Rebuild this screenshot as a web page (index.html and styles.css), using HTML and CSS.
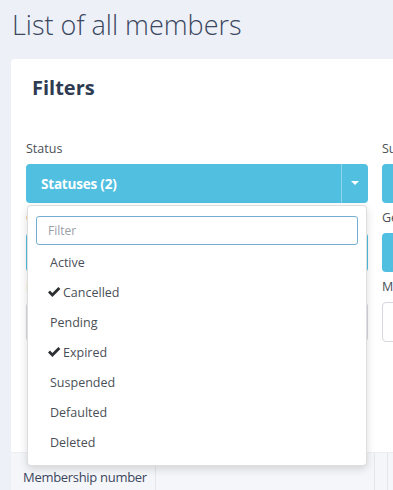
FILE: index.html
```html
<!DOCTYPE html>
<html lang="en">
<head>
    <meta charset="UTF-8">
    <meta name="viewport" content="width=device-width, initial-scale=1.0">
    <title>Members</title>
    <link rel="stylesheet" href="styles.css">
</head>
<body>
    <div class="page">
        <h1 class="page-title">List of all members</h1>

        <div class="card">
            <div class="filters">
                <h2 class="filters-title">Filters</h2>

                <div class="filter-grid">
                    <div class="field">
                        <label>Status</label>
                        <div class="select-wrap">
                            <button class="select-btn" type="button">
                                <span class="select-text">Statuses (2)</span>
                                <span class="select-caret"></span>
                            </button>

                            <div class="dropdown-menu">
                                <input class="menu-search" type="text" placeholder="Filter">
                                <ul class="menu-list">
                                    <li>Active</li>
                                    <li class="checked"><svg class="check" viewBox="0 0 14 12"><path d="M1 6.6 L3 4.6 L5.4 7 L11.4 1 L13.4 3 L5.4 11 Z"/></svg>Cancelled</li>
                                    <li>Pending</li>
                                    <li class="checked"><svg class="check" viewBox="0 0 14 12"><path d="M1 6.6 L3 4.6 L5.4 7 L11.4 1 L13.4 3 L5.4 11 Z"/></svg>Expired</li>
                                    <li>Suspended</li>
                                    <li>Defaulted</li>
                                    <li>Deleted</li>
                                </ul>
                            </div>
                        </div>
                    </div>
                    <div class="field">
                        <label>Subscription</label>
                        <button class="select-btn" type="button">
                            <span class="select-text">All</span>
                            <span class="select-caret"></span>
                        </button>
                    </div>

                    <div class="field">
                        <label>Gender</label>
                        <button class="select-btn" type="button">
                            <span class="select-text">All</span>
                            <span class="select-caret"></span>
                        </button>
                    </div>
                    <div class="field">
                        <label>Gender</label>
                        <button class="select-btn" type="button">
                            <span class="select-text">All</span>
                            <span class="select-caret"></span>
                        </button>
                    </div>

                    <div class="field">
                        <label>Member name</label>
                        <input class="text-input" type="text">
                    </div>
                    <div class="field">
                        <label>Membership number</label>
                        <input class="text-input" type="text">
                    </div>
                </div>
            </div>

            <div class="table-head">
                <div class="th th-number">Membership number</div>
                <div class="th th-name"></div>
                <div class="th"></div>
            </div>
        </div>
    </div>
</body>
</html>
```

FILE: styles.css
```css
body {
    margin: 0;
    background: #edf1f7;
    font-family: 'Open Sans', 'Noto Sans', sans-serif;
    color: #444b55;
    overflow: hidden;
}
.page {
    padding: 8px 0 0 11px;
    width: 900px;
}
.page-title {
    margin: 0 0 0 1px;
    font-size: 27px;
    line-height: 34px;
    font-weight: 300;
    color: #3b4660;
}
.card {
    margin-top: 17px;
    background: #ffffff;
    border-radius: 4px 0 0 0;
}
.filters {
    padding: 17px 0 104px 15px;
}
.filters-title {
    margin: 0 0 40px 6px;
    font-size: 20px;
    line-height: 24px;
    font-weight: 700;
    color: #2f3b52;
}
.filter-grid {
    display: grid;
    grid-template-columns: 342px 342px;
    column-gap: 14px;
}
.field {
    margin-bottom: 6px;
}
.field label {
    display: block;
    font-size: 12.5px;
    line-height: 18px;
    margin-bottom: 6px;
    color: #4a4f57;
}
.select-wrap {
    position: relative;
}
.select-btn {
    display: flex;
    align-items: stretch;
    width: 100%;
    height: 39px;
    padding: 0;
    border: none;
    border-radius: 4px;
    background: #51bfe0;
    color: #ffffff;
    font-family: inherit;
    cursor: pointer;
}
.select-text {
    flex: 1;
    display: flex;
    align-items: center;
    padding-left: 15px;
    font-size: 13.5px;
    font-weight: 700;
    letter-spacing: -0.2px;
}
.select-caret {
    width: 26px;
    border-left: 1px solid rgba(255, 255, 255, 0.35);
    position: relative;
}
.select-caret::after {
    content: '';
    position: absolute;
    left: 9px;
    top: 17px;
    border-left: 4px solid transparent;
    border-right: 4px solid transparent;
    border-top: 4px solid #ffffff;
}
.text-input {
    display: block;
    box-sizing: border-box;
    width: 100%;
    height: 40px;
    border: 1px solid #d5d8dd;
    border-radius: 4px;
    background: #ffffff;
}
.dropdown-menu {
    position: absolute;
    top: 41px;
    left: 1px;
    width: 340px;
    box-sizing: border-box;
    padding: 10px 0 8px;
    background: #ffffff;
    border: 1px solid rgba(0, 0, 0, 0.13);
    border-radius: 4px;
    box-shadow: 0 3px 8px rgba(0, 0, 0, 0.14);
    z-index: 10;
}
.menu-search {
    display: block;
    box-sizing: border-box;
    width: 322px;
    height: 29px;
    margin: 0 0 2px 8px;
    padding: 0 11px;
    border: 1px solid #74aed2;
    border-radius: 3px;
    font-family: inherit;
    font-size: 12px;
    outline: none;
}
.menu-search::placeholder {
    color: #9aa0a8;
}
.menu-list {
    list-style: none;
    margin: 0;
    padding: 0;
}
.menu-list li {
    display: flex;
    align-items: center;
    height: 30px;
    padding-left: 22px;
    font-size: 12.5px;
    color: #4a4f57;
}
.check {
    width: 14px;
    height: 12px;
    margin-left: -3px;
    margin-right: 2px;
    fill: #2d2f33;
}
.table-head {
    display: flex;
    height: 42px;
    background: #f5f6f9;
    border-top: 1px solid #eceef2;
}
.th {
    box-sizing: border-box;
    padding: 15px 0 0 12px;
    font-size: 13px;
    white-space: nowrap;
    color: #3b4660;
    border-right: 1px solid #e3e6eb;
}
.th-number {
    width: 145px;
    letter-spacing: -0.3px;
}
.th-name {
    width: 219px;
}
```
